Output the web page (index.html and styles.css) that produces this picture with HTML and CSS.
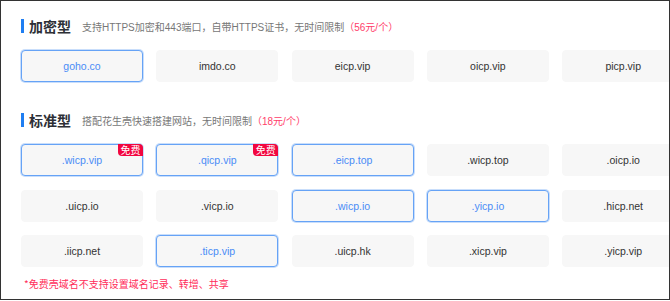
FILE: index.html
```html
<!DOCTYPE html>
<html lang="zh-CN">
<head>
    <meta charset="UTF-8">
    <meta name="viewport" content="width=device-width, initial-scale=1.0">
    <title>域名类型</title>
    <link rel="stylesheet" href="styles.css">
</head>
<body>
    <div class="frame">
        <div class="section">
            <div class="section-title">
                <h2>加密型</h2>
                <span class="desc">支持HTTPS加密和443端口，自带HTTPS证书，无时间限制<em>（56元/个）</em></span>
            </div>
            <div class="domain-grid">
                <div class="domain active">goho.co</div>
                <div class="domain">imdo.co</div>
                <div class="domain">eicp.vip</div>
                <div class="domain">oicp.vip</div>
                <div class="domain">picp.vip</div>
            </div>
        </div>

        <div class="section">
            <div class="section-title">
                <h2>标准型</h2>
                <span class="desc">搭配花生壳快速搭建网站，无时间限制<em>（18元/个）</em></span>
            </div>
            <div class="domain-grid">
                <div class="domain active">.wicp.vip<span class="badge">免费</span></div>
                <div class="domain active">.qicp.vip<span class="badge">免费</span></div>
                <div class="domain active">.eicp.top</div>
                <div class="domain">.wicp.top</div>
                <div class="domain">.oicp.io</div>

                <div class="domain">.uicp.io</div>
                <div class="domain">.vicp.io</div>
                <div class="domain active">.wicp.io</div>
                <div class="domain active">.yicp.io</div>
                <div class="domain">.hicp.net</div>

                <div class="domain">.iicp.net</div>
                <div class="domain active">.ticp.vip</div>
                <div class="domain">.uicp.hk</div>
                <div class="domain">.xicp.vip</div>
                <div class="domain">.yicp.vip</div>
            </div>
            <p class="note">*免费壳域名不支持设置域名记录、转增、共享</p>
        </div>
    </div>
</body>
</html>
```

FILE: styles.css
```css
* {
    margin: 0;
    padding: 0;
    box-sizing: border-box;
}

body {
    font-family: "Liberation Sans", Arial, "Noto Sans CJK SC", sans-serif;
    background: #fff;
}

.frame {
    width: 670px;
    height: 300px;
    border: 1px solid #333;
    padding: 17px 0 0 20px;
    overflow: hidden;
}

.section + .section {
    margin-top: 30px;
}

.section-title {
    display: flex;
    align-items: center;
    height: 16px;
    margin-bottom: 16px;
}

.section-title h2 {
    font-family: "Noto Sans CJK SC", sans-serif;
    font-size: 14px;
    font-weight: bold;
    color: #2d2f36;
    line-height: 16px;
    padding-left: 5px;
    border-left: 3px solid #1f7ef2;
    height: 14px;
    display: flex;
    align-items: center;
}

.section-title .desc {
    font-size: 10px;
    color: #777;
    margin-left: 11px;
}

.section-title .desc em {
    font-style: normal;
    color: #ff3d6a;
}

.domain-grid {
    display: grid;
    grid-template-columns: repeat(5, 122px);
    column-gap: 13.3px;
    row-gap: 13.5px;
    width: 700px;
}

.domain {
    position: relative;
    height: 32px;
    display: flex;
    align-items: center;
    justify-content: center;
    background: #f7f7f7;
    border: 1px solid #f7f7f7;
    border-radius: 4px;
    font-size: 10.5px;
    color: #333;
}

.domain.active {
    border-color: #66a3f6;
    box-shadow: 0 0 0 1px #c9defb;
    color: #4a8cf6;
}

.badge {
    position: absolute;
    top: -1px;
    right: -1px;
    width: 25px;
    height: 12px;
    background: #f2063f;
    color: #fff;
    font-family: "Noto Sans CJK SC", sans-serif;
    font-size: 10px;
    line-height: 12px;
    text-align: center;
    border-radius: 0 4px 0 4px;
}

.note {
    margin-top: 10px;
    margin-left: 3px;
    font-family: "Noto Sans CJK SC", sans-serif;
    font-size: 10px;
    line-height: 14px;
    color: #ff2d5a;
}
```
